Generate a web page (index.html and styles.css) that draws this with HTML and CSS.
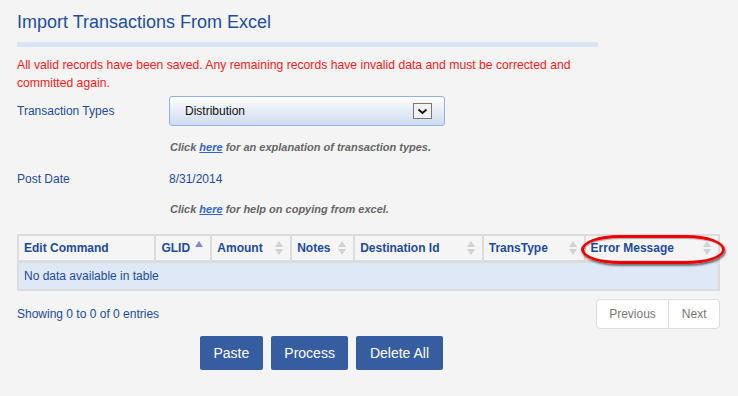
FILE: index.html
```html
<!DOCTYPE html>
<html lang="en">
<head>
  <meta charset="UTF-8">
  <title>Import Transactions From Excel</title>
  <link rel="stylesheet" href="styles.css">
</head>
<body>

<div class="page">
  <h1 class="title">Import Transactions From Excel</h1>
  <div class="title-bar"></div>

  <p class="alert">All valid records have been saved. Any remaining records have invalid data and must be corrected and committed again.</p>

  <div class="form-row row-type">
    <label class="form-label">Transaction Types</label>
    <div class="select">
      <span>Distribution</span>
      <span class="select-btn">
        <svg width="11" height="7" viewBox="0 0 11 7"><path d="M1.5 1.5 L5.5 5 L9.5 1.5" fill="none" stroke="#111" stroke-width="1.8"/></svg>
      </span>
    </div>
  </div>
  <div class="help help-type">Click <a href="#">here</a> for an explanation of transaction types.</div>

  <div class="form-row row-date">
    <label class="form-label">Post Date</label>
    <div class="form-value">8/31/2014</div>
  </div>
  <div class="help help-copy">Click <a href="#">here</a> for help on copying from excel.</div>

  <div class="table-wrap">
    <table class="grid">
      <thead>
        <tr>
          <th class="c1"><span class="th">Edit Command</span></th>
          <th class="c2"><span class="th">GLID <i class="sort-asc"></i></span></th>
          <th class="c3"><span class="th">Amount <i class="sort"></i></span></th>
          <th class="c4"><span class="th">Notes <i class="sort"></i></span></th>
          <th class="c5"><span class="th">Destination Id <i class="sort"></i></span></th>
          <th class="c6"><span class="th">TransType <i class="sort"></i></span></th>
          <th class="c7"><span class="th">Error Message <i class="sort"></i></span></th>
        </tr>
      </thead>
      <tbody>
        <tr><td colspan="7">No data available in table</td></tr>
      </tbody>
    </table>
    <div class="highlight"></div>
  </div>

  <div class="table-footer">
    <div class="info">Showing 0 to 0 of 0 entries</div>
    <div class="pager">
      <a href="#">Previous</a>
      <a href="#">Next</a>
    </div>
  </div>

  <div class="actions">
    <button class="btn">Paste</button>
    <button class="btn">Process</button>
    <button class="btn">Delete All</button>
  </div>
</div>

</body>
</html>
```

FILE: styles.css
```css
* {
  margin: 0;
  padding: 0;
  box-sizing: border-box;
}

body {
  font-family: 'Liberation Sans', Arial, sans-serif;
  font-size: 12px;
  background: #f4f4f4;
  color: #1d4b9c;
}

.page {
  padding: 10px 17px 0 17px;
}

.title {
  font-size: 18px;
  font-weight: normal;
  line-height: 24px;
  color: #1f4e9d;
}

.title-bar {
  width: 581px;
  height: 5px;
  margin-top: 8px;
  background: #dae4f4;
}

.alert {
  max-width: 581px;
  margin-top: 9px;
  font-size: 12.2px;
  line-height: 18px;
  color: #ff1a1a;
}

.form-row {
  display: flex;
  align-items: center;
}

.form-label {
  width: 152px;
  color: #1d4b9c;
}

.row-type {
  margin-top: 4px;
}

.select {
  width: 276px;
  height: 30px;
  display: flex;
  align-items: center;
  justify-content: space-between;
  padding: 0 12px 0 15px;
  border: 1px solid #92b2de;
  border-radius: 3px;
  background: linear-gradient(to bottom, #ffffff 0%, #e8eef8 45%, #cfdbef 100%);
  color: #111;
}

.select-btn {
  width: 19px;
  height: 16px;
  display: flex;
  align-items: center;
  justify-content: center;
  border: 1px solid #777;
  background: #f2f2f2;
}

.help {
  margin-left: 153px;
  line-height: 16px;
  font-size: 11px;
  font-weight: bold;
  font-style: italic;
  color: #666;
}

.help a {
  color: #2f67c9;
}

.help-type {
  margin-top: 13px;
}

.row-date {
  margin-top: 16px;
  line-height: 16px;
}

.form-value {
  color: #1d4b9c;
}

.help-copy {
  margin-top: 14px;
}

.table-wrap {
  position: relative;
  width: 703px;
  margin-top: 17px;
}

.grid {
  width: 100%;
  border-collapse: collapse;
  border: 2px solid #dcdcdc;
}

.grid th {
  height: 26px;
  padding: 0 7px 0 5px;
  border: 2px solid #dcdcdc;
  border-bottom-width: 3px;
  background: #f5f5f5;
  text-align: left;
  font-weight: bold;
  color: #1d4b9c;
}

.th {
  display: flex;
  align-items: center;
  justify-content: space-between;
}

.c1 { width: 138px; }
.c2 { width: 56px; }
.c3 { width: 80px; }
.c4 { width: 63px; }
.c5 { width: 129px; }
.c6 { width: 102px; }
.c7 { width: 135px; }

.sort,
.sort-asc {
  display: inline-block;
  position: relative;
  width: 0;
  height: 0;
  border-left: 4px solid transparent;
  border-right: 4px solid transparent;
}

.sort {
  border-bottom: 6px solid #d2d2d2;
  margin-bottom: 8px;
}

.sort::after {
  content: '';
  position: absolute;
  left: -4px;
  top: 8px;
  border-left: 4px solid transparent;
  border-right: 4px solid transparent;
  border-top: 6px solid #d2d2d2;
}

.sort-asc {
  border-bottom: 6px solid #7f86d9;
  margin-bottom: 7px;
}

.grid td {
  height: 29px;
  padding: 0 5px;
  background: #dfe8f6;
  color: #1d4b9c;
}

.highlight {
  position: absolute;
  left: 564px;
  top: 1px;
  width: 144px;
  height: 29px;
  border: 3px solid #ee0000;
  border-radius: 40px / 15px;
  box-shadow: 1px 2px 2px rgba(0, 0, 0, 0.5), inset 1px 1px 1px rgba(0, 0, 0, 0.3);
}

.table-footer {
  width: 703px;
  margin-top: 8px;
  display: flex;
  align-items: center;
  justify-content: space-between;
}

.pager {
  display: flex;
  height: 30px;
  border: 1px solid #dddddd;
  border-radius: 4px;
  background: #ffffff;
}

.pager a {
  display: flex;
  align-items: center;
  padding: 0 12.5px;
  color: #777;
  text-decoration: none;
}

.pager a + a {
  border-left: 1px solid #dddddd;
}

.actions {
  display: flex;
  gap: 8px;
  margin-top: 7px;
  padding-left: 183px;
}

.btn {
  height: 34px;
  padding: 0 13.5px;
  border: none;
  border-radius: 2px;
  background: #355da0;
  color: #fff;
  font-family: 'Liberation Sans', Arial, sans-serif;
  font-size: 14px;
}
```
